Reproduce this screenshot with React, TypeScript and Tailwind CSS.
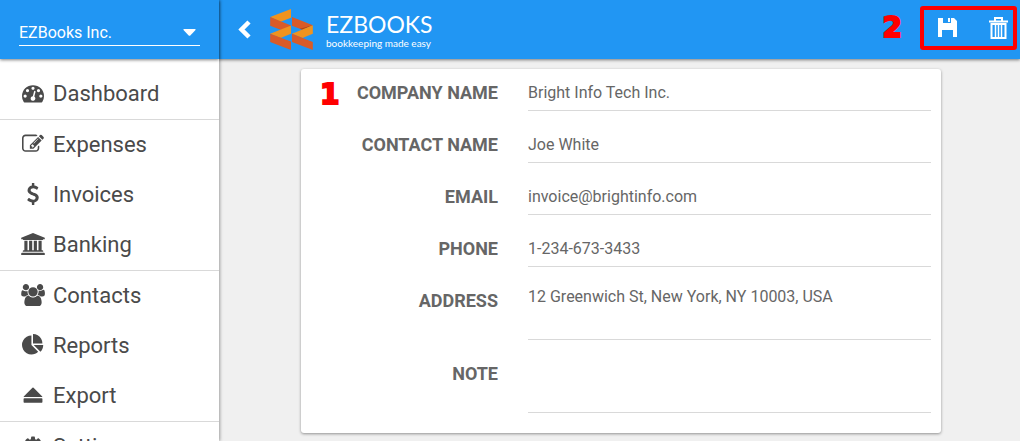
import React from "react";

type IconProps = { d: string; box?: string; className?: string };

function Glyph({ d, box = "0 0 1792 1792", className = "size-[22px]" }: IconProps) {
  return (
    <svg viewBox={box} className={`${className} shrink-0`} fill="currentColor" aria-hidden="true">
      <path d={d} />
    </svg>
  );
}

const icons = {
  dashboard:
    "M384 1152q0-53-37.5-90.5t-90.5-37.5-90.5 37.5-37.5 90.5 37.5 90.5 90.5 37.5 90.5-37.5 37.5-90.5zm192-448q0-53-37.5-90.5t-90.5-37.5-90.5 37.5-37.5 90.5 37.5 90.5 90.5 37.5 90.5-37.5 37.5-90.5zm428 481l101-382q6-26-7.5-48.5t-38.5-29.5-48 6.5-30 39.5l-101 382q-60 5-107 43.5t-63 98.5q-20 77 20 146t117 89 146-20 89-117q16-60-6-117t-72-91zm660-33q0-53-37.5-90.5t-90.5-37.5-90.5 37.5-37.5 90.5 37.5 90.5 90.5 37.5 90.5-37.5 37.5-90.5zm-640-640q0-53-37.5-90.5t-90.5-37.5-90.5 37.5-37.5 90.5 37.5 90.5 90.5 37.5 90.5-37.5 37.5-90.5zm448 192q0-53-37.5-90.5t-90.5-37.5-90.5 37.5-37.5 90.5 37.5 90.5 90.5 37.5 90.5-37.5 37.5-90.5zm320 448q0 261-141 483-19 29-54 29h-1402q-35 0-54-29-141-221-141-483 0-182 71-348t191-286 286-191 348-71 348 71 286 191 191 286 71 348z",
  expenses:
    "M888 1184l116-116-152-152-116 116v56h96v96h56zm440-720q-16-16-33 1l-350 350q-17 17-1 33t33-1l350-350q17-17 1-33zm80 594v190q0 119-84.5 203.5t-203.5 84.5h-832q-119 0-203.5-84.5t-84.5-203.5v-832q0-119 84.5-203.5t203.5-84.5h832q63 0 117 25 15 7 18 23 3 17-9 29l-49 49q-14 14-32 8-23-6-45-6h-832q-66 0-113 47t-47 113v832q0 66 47 113t113 47h832q66 0 113-47t47-113v-126q0-13 9-22l64-64q15-15 35-7t20 29zm-96-738l288 288-672 672h-288v-288zm444 132l-92 92-288-288 92-92q28-28 68-28t68 28l152 152q28 28 28 68t-28 68z",
  invoices:
    "M1362 1185q0 153-99.5 263.5t-258.5 136.5v175q0 14-9 23t-23 9h-135q-13 0-22.5-9.5t-9.5-22.5v-175q-66-9-127.5-31t-101.5-44.5-74-48-46.5-37.5-17.5-18q-17-21-2-41l103-135q7-10 23-12 15-2 24 9l2 2q113 99 243 125 37 8 74 8 81 0 142.5-43t61.5-122q0-28-15-53t-33.5-42-58.5-37.5-66-32-80-32.5q-39-16-61.5-25t-61.5-26.5-62.5-31-56.5-35.5-53.5-42.5-43.5-49-35.5-58-21-66.5-8.5-78q0-138 98-242t255-134v-180q0-13 9.5-22.5t22.5-9.5h135q14 0 23 9t9 23v176q57 6 110.5 23t87 33.5 63.5 37.5 39 29 15 14q17 18 5 38l-81 146q-8 15-23 16-14 3-27-7-3-3-14.5-12t-39-26.5-58.5-32-74.5-26-85.5-11.5q-95 0-155 43t-60 111q0 26 8.5 48t29.5 41.5 39.5 33 56 31 60.5 27 70 27.5q53 20 81 31.5t76 35 75.5 42.5 62 50 53 63.5 31.5 76.5 13 94z",
  banking:
    "M896 0l960 384v128h-128q0 26-20.5 45t-48.5 19h-1526q-28 0-48.5-19t-20.5-45h-128v-128zm-704 640h256v768h128v-768h256v768h128v-768h256v768h128v-768h256v768h59q28 0 48.5 19t20.5 45v64h-1664v-64q0-26 20.5-45t48.5-19h59v-768zm1595 960q28 0 48.5 19t20.5 45v128h-1920v-128q0-26 20.5-45t48.5-19h1782z",
  contacts:
    "M529 896q-162 5-265 128h-134q-82 0-138-40.5t-56-118.5q0-353 124-353 6 0 43.5 21t97.5 42.5 119 21.5q67 0 133-23-5 37-5 66 0 159 93 293zm1071 637q0 120-73 189.5t-194 69.5h-874q-121 0-194-69.5t-73-189.5q0-53 3.5-103.5t14-109 26.5-108.5 43-97.5 62-81 85.5-53.5 111.5-20q10 0 43 21.5t73 48 107 48 135 21.5 135-21.5 107-48 73-48 43-21.5q61 0 111.5 20t85.5 53.5 62 81 43 97.5 26.5 108.5 14 109 3.5 103.5zm-1024-1277q0 106-75 181t-181 75-181-75-75-181 75-181 181-75 181 75 75 181zm704 384q0 159-112.5 271.5t-271.5 112.5-271.5-112.5-112.5-271.5 112.5-271.5 271.5-112.5 271.5 112.5 112.5 271.5zm576 225q0 78-56 118.5t-138 40.5h-134q-103-123-265-128 93-134 93-293 0-29-5-66 66 23 133 23 59 0 119-21.5t97.5-42.5 43.5-21q124 0 124 353zm-128-609q0 106-75 181t-181 75-181-75-75-181 75-181 181-75 181 75 75 181z",
  reports:
    "M768 890l546 546q-106 108-247.5 168t-298.5 60q-209 0-385.5-103t-279.5-279.5-103-385.5 103-385.5 279.5-279.5 385.5-103v762zm187 6h773q0 157-60 298.5t-168 247.5zm709-128h-768v-768q209 0 385.5 103t279.5 279.5 103 385.5z",
  export:
    "M141 1011l710-710q19-19 45-19t45 19l710 710q19 19 13 32t-32 13h-1472q-26 0-32-13t13-32zm1459 525h-1408q-26 0-45-19t-19-45v-256q0-26 19-45t45-19h1408q26 0 45 19t19 45v256q0 26-19 45t-45 19z",
  settings:
    "M1152 896q0-106-75-181t-181-75-181 75-75 181 75 181 181 75 181-75 75-181zm512-109v222q0 12-8 23t-20 13l-185 28q-19 54-39 91 35 50 107 138 10 12 10 25t-9 23q-27 37-99 108t-94 71q-12 0-26-9l-138-108q-44 23-91 38-16 136-29 186-7 28-36 28h-222q-14 0-24.5-8.5t-11.5-21.5l-28-184q-49-16-90-37l-141 107q-10 9-25 9-14 0-25-11-126-114-165-168-7-10-7-23 0-12 8-23 15-21 51-66.5t54-70.5q-27-50-41-99l-183-27q-13-2-21-12.5t-8-23.5v-222q0-12 8-23t19-13l186-28q14-46 39-92-40-57-107-138-10-12-10-24 0-10 9-23 26-36 98.5-107.5t94.5-71.5q13 0 26 10l138 107q44-23 91-38 16-136 29-186 7-28 36-28h222q14 0 24.5 8.5t11.5 21.5l28 184q49 16 90 37l142-107q9-9 24-9 13 0 25 10 129 119 165 170 7 8 7 22 0 12-8 23-15 21-51 66.5t-54 70.5q26 50 41 98l183 28q13 2 21 12.5t8 23.5z",
};

type NavItem = { label: string; icon: keyof typeof icons; wide?: boolean };

const navGroups: NavItem[][] = [
  [{ label: "Dashboard", icon: "dashboard" }],
  [
    { label: "Expenses", icon: "expenses" },
    { label: "Invoices", icon: "invoices" },
    { label: "Banking", icon: "banking", wide: true },
  ],
  [
    { label: "Contacts", icon: "contacts", wide: true },
    { label: "Reports", icon: "reports" },
    { label: "Export", icon: "export" },
  ],
  [{ label: "Settings", icon: "settings" }],
];

function Sidebar() {
  return (
    <aside className="z-10 flex w-[219px] shrink-0 flex-col bg-white shadow-[1px_0_3px_rgba(0,0,0,0.35)]">
      <div className="flex h-[59px] shrink-0 flex-col bg-[#2196f3] px-5 pt-5 shadow-[0_1px_3px_rgba(0,0,0,0.5)]">
        <div className="relative -mx-px flex items-center border-b border-white">
          <select
            aria-label="Company"
            className="h-[25px] w-full appearance-none bg-transparent text-base text-white outline-none"
          >
            <option>EZBooks Inc.</option>
          </select>
          <svg viewBox="0 0 13 7" className="pointer-events-none absolute right-1 h-[7px] w-[13px]" aria-hidden="true">
            <path d="M1 0H12Q13 0 12.5 1L7.3 6.5Q6.5 7.2 5.7 6.5L.5 1Q0 0 1 0Z" fill="#fff" />
          </svg>
        </div>
      </div>
      <nav className="pt-[10px]">
        {navGroups.map((group, i) => (
          <ul key={i} className="border-b border-[#d9d9d9]">
            {group.map((item) => (
              <li key={item.label}>
                <a href="#" className="flex h-[50px] items-center gap-[9px] pb-[2px] pl-[22px] text-[22px] text-[#4a4a4a]">
                  <span className="flex w-[22px] justify-center">
                    <Glyph
                      d={icons[item.icon]}
                      box={item.wide ? "-64 0 1920 1792" : undefined}
                      className={item.wide ? "h-[22px] w-[24px]" : "size-[22px]"}
                    />
                  </span>
                  {item.label}
                </a>
              </li>
            ))}
          </ul>
        ))}
      </nav>
    </aside>
  );
}

function Logo() {
  return (
    <a href="#" className="flex items-center gap-[13px] text-white">
      <svg viewBox="0 0 127 122" className="h-[41px] w-[43px]" aria-hidden="true">
        <path d="M0 24L62 0v26L31 38z" fill="#f0931e" />
        <path d="M0 24L62 49v25L0 50z" fill="#d95b28" />
        <path d="M0 74L62 49v25L31 86z" fill="#f0931e" />
        <path d="M0 74L62 97v25L0 98z" fill="#d95b28" />
        <path d="M65 24L127 48L96 62L65 50z" fill="#d95b28" />
        <path d="M88 59L127 48L96 62z" fill="#b0451c" />
        <path d="M65 74L127 48v26L96 86z" fill="#f0931e" />
        <path d="M65 74L127 98v24L65 98z" fill="#d95b28" />
      </svg>
      <span className="flex flex-col font-[Lato,sans-serif]">
        <span className="text-[23px] leading-[26px]">EZBOOKS</span>
        <span className="text-[10px] leading-[12px]">bookkeeping made easy</span>
      </span>
    </a>
  );
}

function TopBar() {
  return (
    <header className="flex h-[59px] shrink-0 items-center bg-[#2196f3] pr-[3px] text-white shadow-[0_1px_3px_rgba(0,0,0,0.5)]">
      <button aria-label="Back" className="ml-[19px] mr-[19px] flex">
        <svg viewBox="0 0 13 19" className="h-[19px] w-[13px]" fill="none" aria-hidden="true">
          <path d="M11 2L3.5 9.5L11 17" stroke="#fff" strokeWidth="4.5" />
        </svg>
      </button>
      <Logo />
      <span className="ml-auto mr-[18px] pb-[3px] font-['DejaVu_Sans',sans-serif] text-[28px] font-bold text-[#f00] [-webkit-text-stroke:2px_#f00]">
        2
      </span>
      <div className="mt-[6px] flex h-[44px] w-[97px] shrink-0 items-center justify-between self-start rounded-[3px] border-4 border-[#f00] pb-px pl-[14px] pr-[5px]">
        <button aria-label="Save">
          <svg viewBox="0 0 19 19" className="size-[19px]" fill="#fff" aria-hidden="true">
            <path d="M0 0h5v5h8V0h3l3 3v16h-4v-7H4v7H0zM10 0h2v4h-2z" />
          </svg>
        </button>
        <button aria-label="Delete">
          <svg viewBox="0 0 19 22" className="h-[22px] w-[19px]" aria-hidden="true">
            <path d="M6 4V1h7v3M0 4.5h19M2.5 7v14h14V7z" fill="none" stroke="#fff" strokeWidth="2" />
            <path d="M6.5 7v13M9.5 7v13M12.5 7v13" stroke="#fff" strokeWidth="1.5" />
          </svg>
        </button>
      </div>
    </header>
  );
}

type Field = { id: string; label: string; value: string; type?: string; multiline?: boolean };

const fields: Field[] = [
  { id: "company", label: "COMPANY NAME", value: "Bright Info Tech Inc." },
  { id: "contact", label: "CONTACT NAME", value: "Joe White" },
  { id: "email", label: "EMAIL", value: "invoice@brightinfo.com", type: "email" },
  { id: "phone", label: "PHONE", value: "1-234-673-3433", type: "tel" },
  { id: "address", label: "ADDRESS", value: "12 Greenwich St, New York, NY 10003, USA", multiline: true },
  { id: "note", label: "NOTE", value: "", multiline: true },
];

function ContactForm() {
  return (
    <form className="relative ml-[82px] mr-[79px] mt-[10px] flex flex-col gap-[15px] rounded-[3px] bg-white pb-5 pr-[10px] pt-[5px] shadow-[0_1px_3px_rgba(0,0,0,0.4)]">
      <span className="absolute left-[19px] top-[9px] font-['DejaVu_Sans',sans-serif] text-[28px] font-bold leading-[34px] text-[#f00] [-webkit-text-stroke:2px_#f00]">
        1
      </span>
      {fields.map((f) => (
        <div key={f.id} className="flex gap-[30px]">
          <label htmlFor={f.id} className="w-[197px] shrink-0 text-right text-lg font-bold leading-[37px] text-[#666]">
            {f.label}
          </label>
          {f.multiline ? (
            <textarea
              id={f.id}
              defaultValue={f.value}
              className="h-[58px] min-w-0 flex-1 resize-none border-b border-[#d9d9d9] pt-[3px] text-base text-[#666] outline-none"
            />
          ) : (
            <input
              id={f.id}
              type={f.type ?? "text"}
              defaultValue={f.value}
              className="h-[37px] min-w-0 flex-1 border-b border-[#d9d9d9] text-base text-[#666] outline-none"
            />
          )}
        </div>
      ))}
    </form>
  );
}

export default function App() {
  return (
    <div className="flex h-screen overflow-hidden bg-[#f0f0f0] font-[Roboto,sans-serif]">
      <Sidebar />
      <main className="flex min-w-0 flex-1 flex-col">
        <TopBar />
        <ContactForm />
      </main>
    </div>
  );
}
